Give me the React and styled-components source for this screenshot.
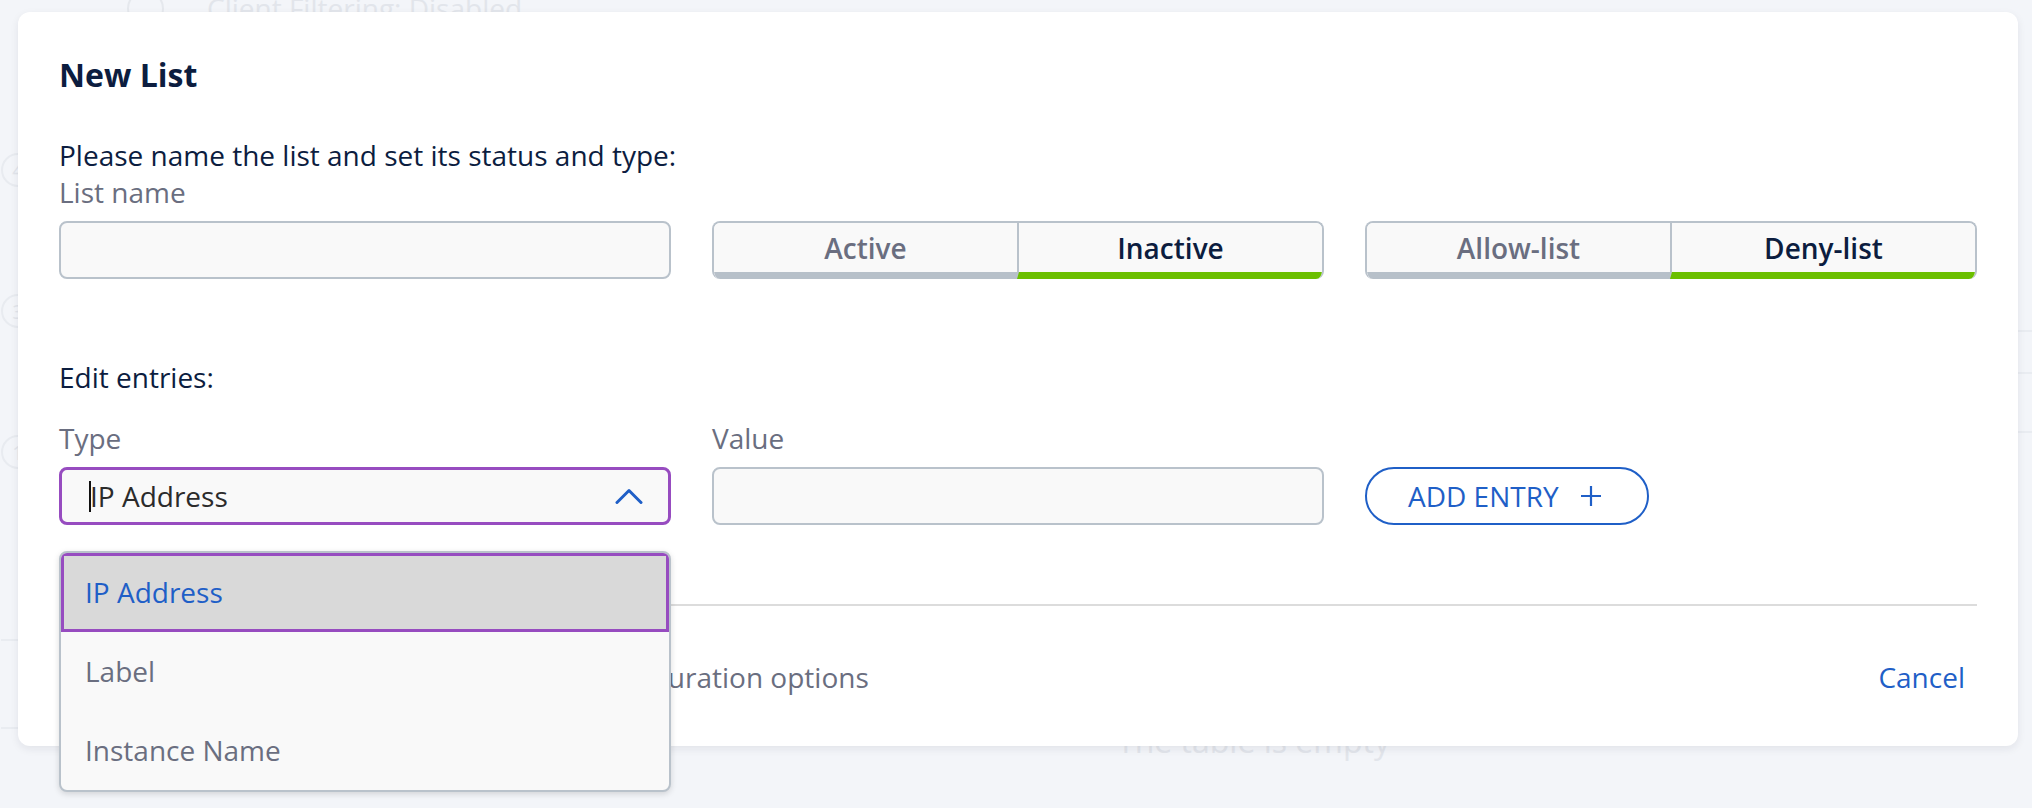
import React from "react";
import styled, { createGlobalStyle } from "styled-components";

const GlobalStyle = createGlobalStyle`
  html, body { margin: 0; padding: 0; }
  body {
    font-family: "Open Sans", "Noto Sans", sans-serif;
    background: #f3f5f9;
    width: 2032px;
    height: 808px;
    overflow: hidden;
  }
  * { box-sizing: border-box; }
`;

const NAVY = "#0c1d3f";
const GRAY = "#6a6e80";
const BLUE = "#1f5fc7";
const PURPLE = "#974cc0";
const LINE = "#b9c2cb";
const GHOST = "#e2e5eb";

const Stage = styled.div`
  position: relative;
  width: 2032px;
  height: 808px;
  overflow: hidden;
`;

/* ---------- background page (behind the dialog) ---------- */
const Page = styled.div`
  display: grid;
  grid-template-columns: 40px 1fr;
  height: 808px;
  background: #f3f5f9;
  color: ${GHOST};
`;

const Rail = styled.div`
  display: flex;
  flex-direction: column;
  align-items: flex-start;
  padding: 153px 0 0 1px;
`;

const StepDot = styled.div`
  width: 34px;
  height: 34px;
  border-radius: 50%;
  border: 2px solid #e8ebf0;
  display: flex;
  align-items: center;
  justify-content: center;
  font-size: 20px;
  color: ${GHOST};
  & + & { margin-top: 107px; }
`;

const RailLine = styled.div`
  align-self: stretch;
  height: 2px;
  background: #e9ecf1;
  margin-top: ${(p) => p.$gap}px;
`;

const Main = styled.div`
  display: flex;
  flex-direction: column;
`;

const GhostHeader = styled.div`
  display: flex;
  align-items: center;
  gap: 43px;
  margin: -10px 0 0 87px;
  height: 37px;
  font-size: 28px;
  line-height: 37px;
`;

const GhostIcon = styled.span`
  width: 37px;
  height: 37px;
  border-radius: 50%;
  border: 2px solid #e5e8ed;
`;

const GhostTable = styled.div`
  margin-top: 303px;
  display: flex;
  flex-direction: column;
`;

const GhostRow = styled.div`
  height: ${(p) => p.$h}px;
  border-top: 2px solid #e9ecf1;
`;

const EmptyNote = styled.div`
  margin: auto 0 45px 1077px;
  font-size: 32px;
  line-height: 44px;
  color: ${GHOST};
`;

/* ---------- dialog ---------- */
const Dialog = styled.section`
  position: absolute;
  top: 12px;
  left: 18px;
  width: 2000px;
  background: #ffffff;
  border-radius: 12px;
  box-shadow: 0 3px 8px rgba(20, 30, 50, 0.08);
  padding: 41px 41px 40px 41px;
  display: flex;
  flex-direction: column;
  color: ${NAVY};
`;

const Title = styled.h2`
  margin: 0;
  font-size: 32px;
  font-weight: 700;
  line-height: 44px;
  color: ${NAVY};
`;

const Intro = styled.p`
  margin: 40px 0 0;
  font-size: 28px;
  line-height: 37px;
`;

const SectionHeading = styled.h3`
  margin: 80px 0 0;
  font-size: 28px;
  font-weight: 400;
  line-height: 37px;
  color: ${NAVY};
`;

const FieldRow = styled.div`
  display: grid;
  grid-template-columns: repeat(3, 1fr);
  column-gap: 41px;
  align-items: end;
  margin-top: ${(p) => p.$top || 0}px;
`;

const Field = styled.div`
  position: relative;
  display: flex;
  flex-direction: column;
`;

const FieldLabel = styled.label`
  font-size: 28px;
  line-height: 37px;
  color: ${GRAY};
  margin-bottom: 10px;
`;

const TextInput = styled.input`
  width: 100%;
  height: 58px;
  border: 2px solid ${LINE};
  border-radius: 8px;
  background: #f9f9f9;
  font: inherit;
  font-size: 28px;
  padding: 0 24px;
  outline: none;
`;

const Segmented = styled.div`
  display: flex;
  height: 58px;
  border: 2px solid ${LINE};
  border-bottom: 0;
  border-radius: 8px;
  overflow: hidden;
`;

const Segment = styled.button`
  flex: 1;
  display: flex;
  align-items: center;
  justify-content: center;
  border: 0;
  border-bottom: 7px solid ${(p) => (p.$on ? "#6bbf00" : "#b7c0c9")};
  background: #f9f9f9;
  font-family: inherit;
  font-size: 28px;
  font-weight: 600;
  color: ${(p) => (p.$on ? NAVY : GRAY)};
  padding: 0;
  & + & { border-left: 2px solid ${LINE}; }
`;

const SelectBox = styled.div`
  display: flex;
  align-items: center;
  justify-content: space-between;
  height: 58px;
  border: 3px solid ${PURPLE};
  border-radius: 8px;
  background: #f9f9f9;
  padding: 0 25px 0 27px;
  font-size: 28px;
  color: #2b2b2b;
`;

const SelectValue = styled.span`
  display: flex;
  align-items: center;
`;

const Caret = styled.span`
  display: inline-block;
  width: 2px;
  height: 31px;
  background: #111;
  margin-right: -1px;
`;

const Menu = styled.ul`
  position: absolute;
  top: calc(100% + 26px);
  left: 0;
  right: 0;
  z-index: 5;
  margin: 0;
  padding: 0;
  list-style: none;
  border: 2px solid ${LINE};
  border-radius: 8px;
  overflow: hidden;
  background: #f9f9f9;
  box-shadow: 0 2px 6px rgba(0, 0, 0, 0.14);
`;

const Option = styled.li`
  height: 79px;
  display: flex;
  align-items: center;
  padding-left: ${(p) => (p.$selected ? 21 : 24)}px;
  font-size: 28px;
  line-height: 37px;
  color: ${(p) => (p.$selected ? BLUE : GRAY)};
  background: ${(p) => (p.$selected ? "#d9d9d9" : "transparent")};
  border: ${(p) => (p.$selected ? `3px solid ${PURPLE}` : "0")};
`;

const AddButton = styled.button`
  justify-self: start;
  display: flex;
  align-items: center;
  gap: 21px;
  height: 58px;
  padding: 0 45px 0 41px;
  border: 2px solid ${BLUE};
  border-radius: 29px;
  background: #fff;
  color: ${BLUE};
  font-family: inherit;
  font-size: 28px;
  line-height: 37px;
`;

const Divider = styled.div`
  margin-top: 79px;
  height: 2px;
  background: #dcdcdc;
`;

const Footer = styled.div`
  margin-top: 42px;
  height: 58px;
  display: flex;
  align-items: center;
  justify-content: space-between;
`;

const Disclosure = styled.button`
  display: flex;
  align-items: center;
  gap: 8px;
  border: 0;
  background: none;
  padding: 0;
  font-family: inherit;
  font-size: 28px;
  line-height: 37px;
  color: ${GRAY};
`;

const LinkButton = styled.button`
  height: 58px;
  border: 0;
  background: none;
  padding: 0 12px;
  font-family: inherit;
  font-size: 28px;
  line-height: 37px;
  color: ${BLUE};
`;

const ChevronUp = () => (
  <svg width="28" height="16" viewBox="0 0 28 16" fill="none">
    <path d="M2 14.5 L14 2.5 L26 14.5" stroke={BLUE} strokeWidth="3" strokeLinecap="round" strokeLinejoin="round" />
  </svg>
);

const ChevronRight = () => (
  <svg width="20" height="20" viewBox="0 0 20 20" fill="none">
    <path d="M7 3 L14 10 L7 17" stroke={GRAY} strokeWidth="2.5" strokeLinecap="round" strokeLinejoin="round" />
  </svg>
);

const Plus = () => (
  <svg width="22" height="22" viewBox="0 0 22 22" fill="none">
    <path d="M11 1 V21 M1 11 H21" stroke={BLUE} strokeWidth="2.2" />
  </svg>
);

export default function App() {
  return (
    <Stage>
      <GlobalStyle />
      <Page aria-hidden="true">
        <Rail>
          <StepDot>4</StepDot>
          <StepDot>3</StepDot>
          <StepDot>1</StepDot>
          <RailLine $gap={170} />
          <RailLine $gap={86} />
        </Rail>
        <Main>
          <GhostHeader>
            <GhostIcon />
            <span>Client Filtering: Disabled</span>
          </GhostHeader>
          <GhostTable>
            <GhostRow $h={42} />
            <GhostRow $h={59} />
            <GhostRow $h={2} />
          </GhostTable>
          <EmptyNote>The table is empty</EmptyNote>
        </Main>
      </Page>

      <Dialog role="dialog" aria-label="New List">
        <Title>New List</Title>
        <Intro>Please name the list and set its status and type:</Intro>
        <FieldRow>
          <Field>
            <FieldLabel>List name</FieldLabel>
            <TextInput />
          </Field>
          <Segmented>
            <Segment>Active</Segment>
            <Segment $on>Inactive</Segment>
          </Segmented>
          <Segmented>
            <Segment>Allow-list</Segment>
            <Segment $on>Deny-list</Segment>
          </Segmented>
        </FieldRow>

        <SectionHeading>Edit entries:</SectionHeading>
        <FieldRow $top={24}>
          <Field>
            <FieldLabel>Type</FieldLabel>
            <SelectBox>
              <SelectValue>
                <Caret />
                IP Address
              </SelectValue>
              <ChevronUp />
            </SelectBox>
            <Menu role="listbox">
              <Option $selected>IP Address</Option>
              <Option>Label</Option>
              <Option>Instance Name</Option>
            </Menu>
          </Field>
          <Field>
            <FieldLabel>Value</FieldLabel>
            <TextInput />
          </Field>
          <AddButton>
            ADD ENTRY
            <Plus />
          </AddButton>
        </FieldRow>

        <Divider />
        <Footer>
          <Disclosure>
            <ChevronRight />
            Expand to view and edit the advanced configuration options
          </Disclosure>
          <LinkButton>Cancel</LinkButton>
        </Footer>
      </Dialog>
    </Stage>
  );
}
